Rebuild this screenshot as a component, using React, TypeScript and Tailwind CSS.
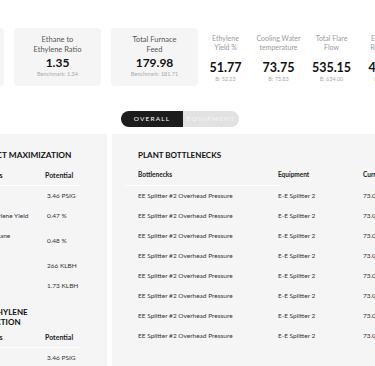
const topCards = [
  { label: ["Dilution Steam", "Ratio"], value: "0.32", bench: "Benchmark: 0.31" },
  { label: ["Ethane to", "Ethylene Ratio"], value: "1.35", bench: "Benchmark: 1.34" },
  { label: ["Total Furnace", "Feed"], value: "179.98", bench: "Benchmark: 181.71" },
];

const plainStats = [
  { label: ["Ethylene", "Yield %"], value: "51.77", bench: "B: 52.23" },
  { label: ["Cooling Water", "temperature"], value: "73.75", bench: "B: 73.83" },
  { label: ["Total Flare", "Flow"], value: "535.15", bench: "B: 634.00" },
  { label: ["Ethylene", "Recovery"], value: "42.10", bench: "B: 43.00" },
];

const productRows = [
  { name: "Pressure", potential: "3.46 PSIG", tall: false },
  { name: "Higher Ethylene Yield", potential: "0.47 %", tall: false },
  { name: "Recycle Ethane Conversion", potential: "0.48 %", tall: true },
  { name: "Feed", potential: "266 KLBH", tall: false },
  { name: "Steam", potential: "1.73 KLBH", tall: false },
];

const bottlenecks = Array.from({ length: 8 }, (_, i) => ({
  id: i,
  name: "EE Splitter #2 Overhead Pressure",
  equipment: "E-E Splitter 2",
  current: "73.00 PSIG",
}));

const App = () => {
  return (
    <div className="w-[375px] h-[366px] overflow-hidden bg-white font-['Lato',sans-serif] text-[#222]">
      <div className="-ml-[100px] w-[640px]">
        {/* kpi strip */}
        <div className="flex pt-[28px] pl-[17px]">
          {topCards.map((c) => (
            <div
              key={c.value}
              className="mr-[10px] flex h-[58px] w-[87px] flex-col items-center rounded-[4px] bg-[#f5f5f5] pt-[7px]"
            >
              <div className="text-center text-[7.5px] leading-[10px] text-[#555]">
                {c.label[0]}
                <br />
                {c.label[1]}
              </div>
              <div className="mt-[1px] text-[12px] font-bold leading-[14px] text-[#111]">{c.value}</div>
              <div className="text-[5.5px] leading-[8px] text-[#aaa]">{c.bench}</div>
            </div>
          ))}
          <div className="-ml-[10px] flex pl-[1px]">
            {plainStats.map((s) => (
              <div key={s.value} className="flex w-[53px] flex-col items-center pt-[6px]">
                <div className="text-center text-[7px] leading-[9px] text-[#9a9a9a]">
                  {s.label[0]}
                  <br />
                  {s.label[1]}
                </div>
                <div className="mt-[9px] text-[12.5px] font-bold leading-[14px] text-[#111]">{s.value}</div>
                <div className="text-[5.5px] leading-[8px] text-[#aaa]">{s.bench}</div>
              </div>
            ))}
          </div>
        </div>

        {/* toggle */}
        <div className="ml-[221px] mt-[25px] flex h-[16px] w-[118px] overflow-hidden rounded-full">
          <div className="flex w-[62px] items-center justify-center bg-[#1c1c1c] text-[6.5px] tracking-[0.18em] text-white">
            OVERALL
          </div>
          <div className="flex flex-1 items-center justify-center bg-[#e2e2e2] text-[6.5px] tracking-[0.18em] text-[#f6f6f6]">
            EQUIPMENT
          </div>
        </div>

        {/* panels */}
        <div className="ml-[41px] mt-[7px] flex gap-[5px]">
          <div className="h-[260px] w-[166px] shrink-0 bg-[#f5f5f5] pl-[26px] pt-[16px]">
            <div className="text-[8.3px] font-bold leading-[10px] text-[#111]">PRODUCT MAXIMIZATION</div>
            <div className="mt-[5px] flex h-[20px] items-center text-[7px] font-bold text-[#222]">
              <div className="w-[78px]">Constraints</div>
              <div>Potential</div>
            </div>
            <div className="-ml-[12px] h-px w-[125px] bg-white" />
            {productRows.map((r) => (
              <div
                key={r.name}
                className={`flex items-center text-[6.5px] text-[#333] ${r.tall ? "h-[30px]" : "h-[20px]"}`}
              >
                <div className="w-[78px] pr-[8px] leading-[10px]">{r.name}</div>
                <div className="pl-[2px]">{r.potential}</div>
              </div>
            ))}
            <div className="mt-[11px] text-[8px] font-bold leading-[10px] text-[#111]">
              MAX ETHYLENE
              <br />
              PRODUCTION
            </div>
            <div className="flex h-[20px] items-center text-[7px] font-bold text-[#222]">
              <div className="w-[78px]">Constraints</div>
              <div>Potential</div>
            </div>
            <div className="-ml-[12px] h-px w-[125px] bg-white" />
            <div className="flex h-[20px] items-center text-[6.5px] text-[#333]">
              <div className="w-[78px]">Pressure</div>
              <div className="pl-[2px]">3.46 PSIG</div>
            </div>
          </div>

          <div className="h-[260px] w-[420px] shrink-0 bg-[#f5f5f5] pl-[26px] pt-[16px]">
            <div className="text-[8px] font-bold leading-[10px] text-[#111]">PLANT BOTTLENECKS</div>
            <div className="mt-[5px] flex h-[20px] items-center text-[6.5px] font-bold text-[#222]">
              <div className="w-[140px]">Bottlenecks</div>
              <div className="w-[85px]">Equipment</div>
              <div>Current</div>
            </div>
            <div className="-ml-[12px] h-px w-[155px] bg-white" />
            {bottlenecks.map((b) => (
              <div key={b.id} className="flex h-[20px] items-center text-[6.5px] text-[#333]">
                <div className="w-[140px]">{b.name}</div>
                <div className="w-[85px]">{b.equipment}</div>
                <div>{b.current}</div>
              </div>
            ))}
          </div>
        </div>
      </div>
    </div>
  );
};

export default App;
